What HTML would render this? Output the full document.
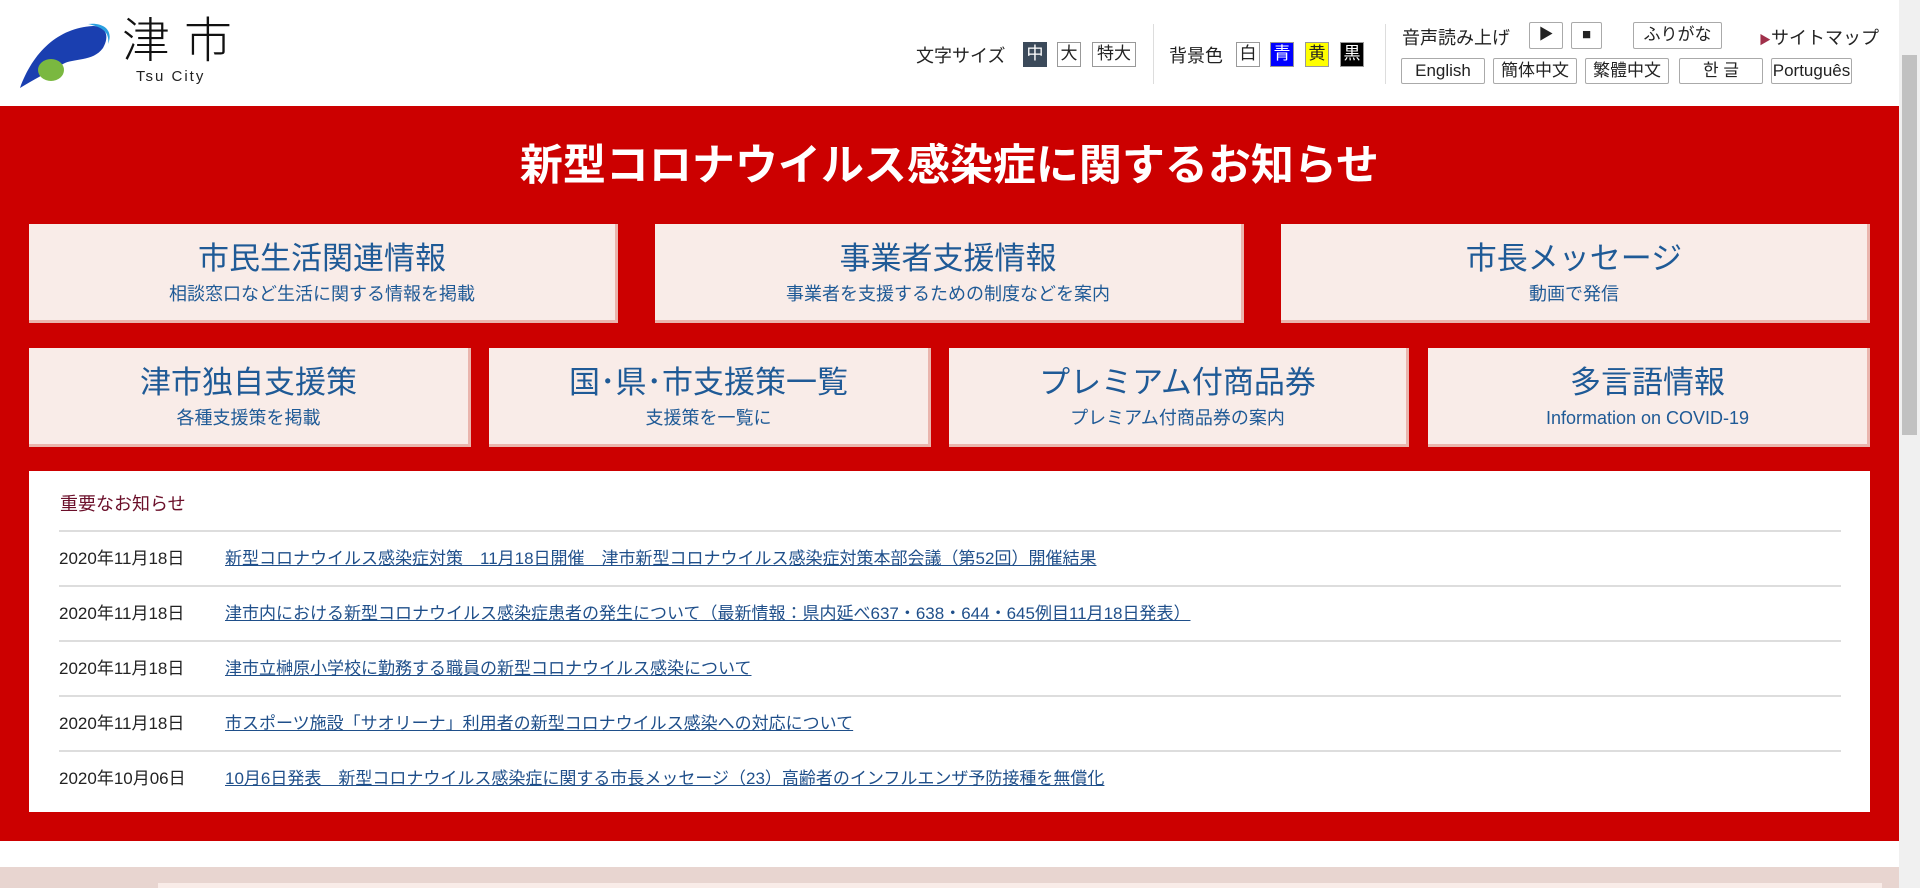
<!DOCTYPE html>
<html><head><meta charset="utf-8">
<style>
*{margin:0;padding:0;box-sizing:border-box}
body{width:1920px;height:888px;overflow:hidden;background:#fff;font-family:"Liberation Sans","Noto Sans CJK JP",sans-serif;position:relative;color:#222}
.a{position:absolute;white-space:nowrap}
.btn{position:absolute;border:1px solid #aaa;border-radius:2px;background:#fff;font-size:17px;text-align:center;color:#222;line-height:24px}
.sb{position:absolute;border:1px solid #999;font-size:17px;text-align:center;line-height:22px;width:24px;height:25px;top:42px}
.red{position:absolute;left:0;top:106px;width:1899px;height:735px;background:#cc0000}
.box{position:absolute;background:#f9ece8;border-right:3px solid #eab5ad;border-bottom:3px solid #eab5ad;text-align:center;color:#1f5a96}
.box b{display:block;font-weight:normal;font-size:31px;margin-top:16px;line-height:38px}
.box s{display:block;text-decoration:none;font-size:18px;line-height:26px;margin-top:3px}
.news{position:absolute;left:29px;top:471px;width:1841px;height:341px;background:#fff}
.row{position:absolute;left:30px;width:1782px;border-top:2px solid #ddd;height:55px;font-size:17px;line-height:53px}
.row span{position:absolute;left:0}
.row a{position:absolute;left:166px;color:#1f4f8a;text-decoration:underline}
</style></head><body>
<svg class="a" style="left:18px;top:22px" width="95" height="68" viewBox="0 0 95 68">
<path d="M2 66 C15 30 40 6 75 4 C88 4 92 14 85 26 C75 40 55 36 45 42 C30 50 15 58 2 66Z" fill="#1a3fb0"/>
<path d="M70 2 C85 0 96 8 90 22 C92 10 84 5 70 2Z" fill="#2a9fe0"/>
<ellipse cx="33" cy="48" rx="13" ry="11" fill="#7ab840"/>
</svg>
<div class="a" style="left:122px;top:14px;font-size:48px;line-height:56px;letter-spacing:14px;font-weight:300;color:#111">津市</div>
<div class="a" style="left:136px;top:68px;font-size:15px;letter-spacing:2px;color:#222">Tsu City</div>

<div class="a" style="left:916px;top:42px;font-size:18px">文字サイズ</div>
<div class="sb" style="left:1023px;background:#3b4a5a;color:#fff;border-color:#3b4a5a">中</div>
<div class="sb" style="left:1057px">大</div>
<div class="sb" style="left:1092px;width:44px">特大</div>
<div class="a" style="left:1153px;top:24px;width:1px;height:60px;background:#ddd"></div>
<div class="a" style="left:1169px;top:42px;font-size:18px">背景色</div>
<div class="sb" style="left:1236px">白</div>
<div class="sb" style="left:1270px;background:#0000ff;color:#fff">青</div>
<div class="sb" style="left:1305px;background:#ffff00">黄</div>
<div class="sb" style="left:1340px;background:#000;color:#fff">黒</div>
<div class="a" style="left:1385px;top:24px;width:1px;height:60px;background:#ddd"></div>
<div class="a" style="left:1402px;top:24px;font-size:18px">音声読み上げ</div>
<div class="btn" style="left:1529px;top:22px;width:34px;height:27px;font-size:15px">▶</div>
<div class="btn" style="left:1571px;top:22px;width:31px;height:27px;font-size:15px">■</div>
<div class="btn" style="left:1633px;top:22px;width:89px;height:27px">ふりがな</div>
<div class="a" style="left:1759px;top:24px;font-size:18px"><span style="color:#a0304a;font-size:12px">▶</span>サイトマップ</div>
<div class="btn" style="left:1401px;top:58px;width:84px;height:26px">English</div>
<div class="btn" style="left:1493px;top:58px;width:84px;height:26px">簡体中文</div>
<div class="btn" style="left:1585px;top:58px;width:84px;height:26px">繁體中文</div>
<div class="btn" style="left:1679px;top:58px;width:84px;height:26px">한 글</div>
<div class="btn" style="left:1771px;top:58px;width:81px;height:26px">Português</div>
<div class="a" style="left:1899px;top:0;width:21px;height:888px;background:#f0f0f0"></div>
<div class="a" style="left:1902px;top:55px;width:15px;height:380px;background:#c1c1c1"></div>

<div class="red"></div>
<div class="a" style="left:0;width:1899px;top:140px;text-align:center;color:#fff;font-size:43px;font-weight:bold;line-height:52px">新型コロナウイルス感染症に関するお知らせ</div>

<div class="box" style="left:29px;top:224px;width:589px;height:99px"><b>市民生活関連情報</b><s>相談窓口など生活に関する情報を掲載</s></div>
<div class="box" style="left:655px;top:224px;width:589px;height:99px"><b>事業者支援情報</b><s>事業者を支援するための制度などを案内</s></div>
<div class="box" style="left:1281px;top:224px;width:589px;height:99px"><b>市長メッセージ</b><s>動画で発信</s></div>
<div class="box" style="left:29px;top:348px;width:442px;height:99px"><b>津市独自支援策</b><s>各種支援策を掲載</s></div>
<div class="box" style="left:489px;top:348px;width:442px;height:99px"><b>国･県･市支援策一覧</b><s>支援策を一覧に</s></div>
<div class="box" style="left:949px;top:348px;width:460px;height:99px"><b>プレミアム付商品券</b><s>プレミアム付商品券の案内</s></div>
<div class="box" style="left:1428px;top:348px;width:442px;height:99px"><b>多言語情報</b><s>Information on COVID-19</s></div>

<div class="news">
<div class="a" style="left:31px;top:19px;font-size:18px;color:#6b0f2a">重要なお知らせ</div>
<div class="row" style="top:59px"><span>2020年11月18日</span><a>新型コロナウイルス感染症対策　11月18日開催　津市新型コロナウイルス感染症対策本部会議（第52回）開催結果</a></div>
<div class="row" style="top:114px"><span>2020年11月18日</span><a>津市内における新型コロナウイルス感染症患者の発生について（最新情報：県内延べ637・638・644・645例目11月18日発表）</a></div>
<div class="row" style="top:169px"><span>2020年11月18日</span><a>津市立榊原小学校に勤務する職員の新型コロナウイルス感染について</a></div>
<div class="row" style="top:224px"><span>2020年11月18日</span><a>市スポーツ施設「サオリーナ」利用者の新型コロナウイルス感染への対応について</a></div>
<div class="row" style="top:279px"><span>2020年10月06日</span><a>10月6日発表　新型コロナウイルス感染症に関する市長メッセージ（23）高齢者のインフルエンザ予防接種を無償化</a></div>
</div>

<div class="a" style="left:0;top:867px;width:1899px;height:21px;background:#e8d5d0"></div>
<div class="a" style="left:158px;top:883px;width:1724px;height:5px;background:#f9ece8"></div>
</body></html>
